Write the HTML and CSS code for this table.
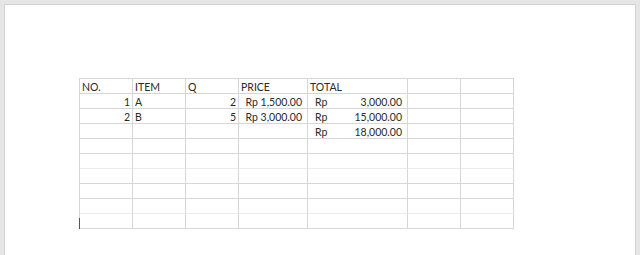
FILE: index.html
```html
<!DOCTYPE html>
<html>
<head>
<meta charset="utf-8">
<link rel="stylesheet" href="styles.css">
</head>
<body>
<div class="page">
  <div class="sheet">
    <div class="c">NO.</div><div class="c">ITEM</div><div class="c">Q</div><div class="c">PRICE</div><div class="c">TOTAL</div><div class="c"></div><div class="c lv"></div>
    <div class="c num">1</div><div class="c">A</div><div class="c num">2</div><div class="c price">Rp 1,500.00</div><div class="c acct"><span>Rp</span><span>3,000.00</span></div><div class="c"></div><div class="c lv"></div>
    <div class="c num">2</div><div class="c">B</div><div class="c num">5</div><div class="c price">Rp 3,000.00</div><div class="c acct"><span>Rp</span><span>15,000.00</span></div><div class="c"></div><div class="c lv"></div>
    <div class="c"></div><div class="c"></div><div class="c"></div><div class="c"></div><div class="c acct"><span>Rp</span><span>18,000.00</span></div><div class="c"></div><div class="c lv"></div>
    <div class="c"></div><div class="c"></div><div class="c"></div><div class="c"></div><div class="c"></div><div class="c"></div><div class="c lv"></div>
    <div class="c lh"></div><div class="c lh"></div><div class="c lh"></div><div class="c lh"></div><div class="c lh"></div><div class="c lh"></div><div class="c lv lh"></div>
    <div class="c"></div><div class="c"></div><div class="c"></div><div class="c"></div><div class="c"></div><div class="c"></div><div class="c lv"></div>
    <div class="c"></div><div class="c"></div><div class="c"></div><div class="c"></div><div class="c"></div><div class="c"></div><div class="c lv"></div>
    <div class="c lh"></div><div class="c lh"></div><div class="c lh"></div><div class="c lh"></div><div class="c lh"></div><div class="c lh"></div><div class="c lv lh"></div>
    <div class="c"></div><div class="c"></div><div class="c"></div><div class="c"></div><div class="c"></div><div class="c"></div><div class="c lv"></div>
    <div class="cursor"></div>
  </div>
</div>
</body>
</html>
```
FILE: styles.css
```css
html, body {
  margin: 0;
  padding: 0;
  height: 100%;
  background: #e6e6e6;
}
body {
  font-family: Lato, "Open Sans", sans-serif;
  font-size: 10.5px;
  color: #2a2a2a;
}
.page {
  box-sizing: border-box;
  margin: 4px 4px 0 4px;
  height: calc(100% - 4px);
  background: #ffffff;
  border: 1px solid #d2d2d2;
  border-bottom: none;
  padding: 73px 0 0 74px;
}
.sheet {
  position: relative;
  display: grid;
  grid-template-columns: 53px 53px 53px 69px 100px 53px 53px;
  grid-auto-rows: 15px;
  width: max-content;
  border-left: 1px solid #d6d6d6;
  border-top: 1px solid #d6d6d6;
}
.c {
  box-sizing: border-box;
  border-right: 1px solid #d6d6d6;
  border-bottom: 1px solid #d6d6d6;
  line-height: 13px;
  padding: 2px 2px 0 2px;
  white-space: nowrap;
}
.lh {
  border-bottom-color: #ebebeb;
}
.lv {
  border-right-color: #d6d6d6;
}
.num {
  text-align: right;
}
.price {
  text-align: right;
  padding-right: 5px;
}
.acct {
  display: flex;
  justify-content: space-between;
  padding: 2px 5px 0 7px;
}
.cursor {
  position: absolute;
  left: -1px;
  top: 139px;
  width: 1px;
  height: 11px;
  background: #555555;
}
```
